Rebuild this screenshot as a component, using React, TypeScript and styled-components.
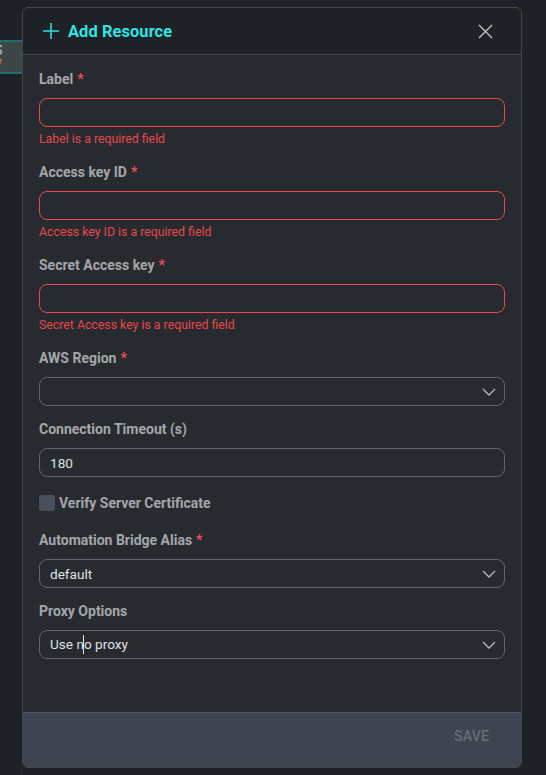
import React from "react";
import styled, { createGlobalStyle } from "styled-components";

const Global = createGlobalStyle`
  html, body { margin: 0; padding: 0; }
  body {
    width: 546px; height: 775px; overflow: hidden;
    background: #1e2125;
    font-family: Roboto, "Noto Sans", sans-serif;
  }
`;

const Page = styled.div`
  position: relative;
  width: 546px;
  height: 775px;
  background: #1e2125;
`;

const BgCard = styled.div`
  position: absolute;
  left: 0; top: 40px;
  width: 22px; height: 34px;
  box-sizing: border-box;
  background: #3d4647;
  border-top: 2px solid #1d6f6c;
  border-bottom: 2px solid #1d6f6c;
  overflow: hidden;
`;
const BgGlyph = styled.span`
  position: absolute; left: -6px; top: 0px;
  font: bold 14px/16px Roboto, sans-serif; color: #9aa0a4;
`;
const BgGlyph2 = styled.span`
  position: absolute; left: -3px; top: 16px;
  font: bold 9px/10px Roboto, sans-serif; color: #b07a2a;
`;
const BgDivider = styled.div`
  position: absolute; left: 21px; top: 766px; width: 1px; height: 9px;
  background: #2a2d31;
`;

const Dialog = styled.div`
  position: absolute;
  left: 22px; top: 7px;
  width: 500px; height: 761px;
  box-sizing: border-box;
  border: 1px solid #43474d;
  border-radius: 6px;
  background: #272b2f;
  display: flex; flex-direction: column;
  overflow: hidden;
`;

const Header = styled.div`
  height: 46px;
  flex: none;
  background: #1e2125;
  border-bottom: 1px solid #43474d;
  display: flex; align-items: center;
  padding: 0 28px 0 19px;
  gap: 8px;
`;
const Title = styled.div`
  flex: 1;
  color: #2ee6e2;
  font-size: 16.4px; font-weight: 700;
  letter-spacing: 0.1px;
`;
const CloseBtn = styled.div`
  width: 15px; height: 15px; display: flex;
`;

const Body = styled.div`
  flex: 1;
  padding: 16px 16px 0 16px;
  display: flex; flex-direction: column;
`;

const Field = styled.div<{ $mb?: number }>`
  display: flex; flex-direction: column;
  margin-bottom: ${(p) => p.$mb ?? 15}px;
`;
const Label = styled.div`
  font-size: 14px; font-weight: 700;
  line-height: 17px;
  color: #a3a7ab;
  margin-bottom: 10px;
`;
const Req = styled.span`
  color: #ef4a4f; margin-left: 4px;
`;
const Box = styled.div<{ $error?: boolean }>`
  height: 29px; box-sizing: border-box;
  border: 1px solid ${(p) => (p.$error ? "#e8474c" : "#5d6474")};
  border-radius: 8px;
  display: flex; align-items: center;
  padding: 0 8px 0 10px;
  font-size: 13.6px; color: #dfe1e3;
`;
const Value = styled.div`
  flex: 1; white-space: pre;
`;
const Caret = styled.span`
  display: inline-block; width: 1px; height: 19px;
  background: #e6e6e6; vertical-align: -5px;
  margin: 0 -0.5px;
`;
const ErrorText = styled.div`
  font-size: 12.3px; line-height: 16px;
  color: #e8474c;
  margin-top: 4px;
`;
const CheckRow = styled.div`
  display: flex; align-items: center; gap: 4px;
  height: 16px;
  margin: 3px 0 21px 0;
`;
const Check = styled.div`
  width: 16px; height: 16px; border-radius: 3px;
  background: #4a505b;
`;
const CheckLabel = styled.div`
  font-size: 14px; font-weight: 700; color: #a3a7ab;
`;

const Footer = styled.div`
  height: 55px; flex: none;
  border-top: 1px solid #4d545f;
  background: #3e4550;
  display: flex; align-items: flex-start; justify-content: flex-end;
  padding: 15px 32px 0 0;
  box-sizing: border-box;
`;
const SaveBtn = styled.div`
  font-size: 14px; font-weight: 500; color: #656d79;
  line-height: 16px;
  letter-spacing: 0.2px;
  text-transform: uppercase;
`;

const Chevron = () => (
  <svg width="14" height="8" viewBox="0 0 14 8" fill="none">
    <polyline points="1,1 7,7 13,1" stroke="#b3b7bd" strokeWidth="1.4" />
  </svg>
);

type FieldProps = {
  label: string;
  required?: boolean;
  error?: string;
  value?: React.ReactNode;
  select?: boolean;
};

const FormField = ({ label, required, error, value, select }: FieldProps) => (
  <Field $mb={error ? 17 : 15}>
    <Label>
      {label}
      {required && <Req>*</Req>}
    </Label>
    <Box $error={!!error}>
      <Value>{value}</Value>
      {select && <Chevron />}
    </Box>
    {error && <ErrorText>{error}</ErrorText>}
  </Field>
);

export default function App() {
  return (
    <Page>
      <Global />
      <BgCard>
        <BgGlyph>S</BgGlyph>
        <BgGlyph2>7</BgGlyph2>
      </BgCard>
      <BgDivider />
      <Dialog>
        <Header>
          <svg width="18" height="18" viewBox="0 0 18 18" fill="none">
            <path d="M9 1v16M1 9h16" stroke="#2ee6e2" strokeWidth="1.5" />
          </svg>
          <Title>Add Resource</Title>
          <CloseBtn>
            <svg width="15" height="15" viewBox="0 0 15 15" fill="none">
              <path d="M1 1l13 13M14 1L1 14" stroke="#c3c6ca" strokeWidth="1.3" />
            </svg>
          </CloseBtn>
        </Header>
        <Body>
          <FormField label="Label" required error="Label is a required field" />
          <FormField label="Access key ID" required error="Access key ID is a required field" />
          <FormField label="Secret Access key" required error="Secret Access key is a required field" />
          <FormField label="AWS Region" required select />
          <FormField label="Connection Timeout (s)" value="180" />
          <CheckRow>
            <Check />
            <CheckLabel>Verify Server Certificate</CheckLabel>
          </CheckRow>
          <FormField label="Automation Bridge Alias" required select value="default" />
          <FormField
            label="Proxy Options"
            select
            value={
              <>
                Use n<Caret />o proxy
              </>
            }
          />
        </Body>
        <Footer>
          <SaveBtn>Save</SaveBtn>
        </Footer>
      </Dialog>
    </Page>
  );
}
